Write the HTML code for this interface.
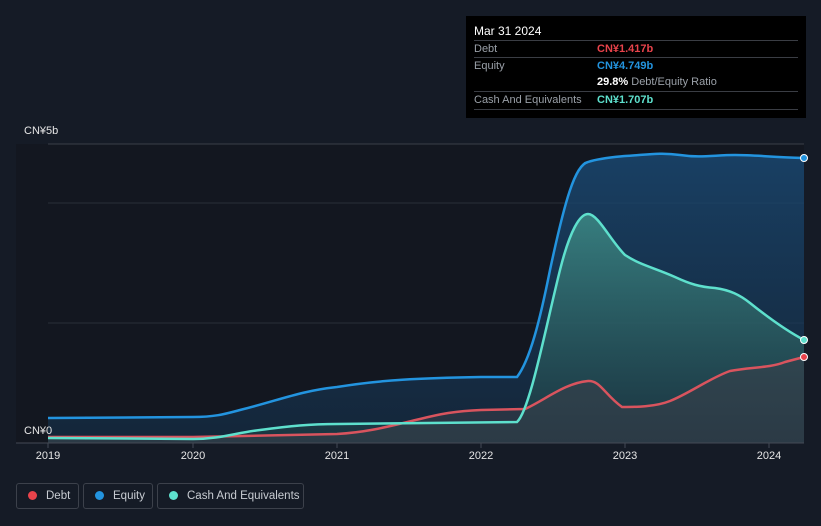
<!DOCTYPE html><html><head><style>
body{margin:0;width:821px;height:526px;background:#151b26;font-family:"Liberation Sans",sans-serif;overflow:hidden;position:relative}
.tt{position:absolute;left:466px;top:16px;width:340px;height:102px;background:#000;color:#fff;font-size:11px}
.row{position:absolute;left:8px;width:324px;border-top:1px solid #3a3d44;height:17px;line-height:17px;color:#9aa0a8}
.v{position:absolute;left:123px;font-weight:bold}
.leg{position:absolute;top:483px;height:26px;border:1px solid #3c414b;border-radius:3px;color:#c8ccd2;font-size:11.5px;line-height:24px;box-sizing:border-box;white-space:nowrap}
.leg i{display:inline-block;width:9px;height:9px;border-radius:50%;margin:0 9px 0 11px;vertical-align:-1px}
.ax{position:absolute;top:450px;color:#e6e6e6;font-size:11px;transform:translateX(-50%)}
</style></head><body>
<svg width="821" height="526" style="position:absolute;left:0;top:0">
<defs>
<linearGradient id="eg" x1="0" y1="0" x2="0" y2="1"><stop offset="0" stop-color="#1a4a75" stop-opacity=".8"/><stop offset="1" stop-color="#15304a" stop-opacity=".6"/></linearGradient>
<linearGradient id="cg" x1="0" y1="0" x2="0" y2="1"><stop offset="0" stop-color="#3f8f88" stop-opacity=".8"/><stop offset="1" stop-color="#1e3d44" stop-opacity=".6"/></linearGradient>
</defs>
<rect x="16" y="144" width="788" height="299" fill="#131720"/>
<line x1="48" y1="144" x2="804" y2="144" stroke="#3a3f48"/>
<line x1="48" y1="203" x2="804" y2="203" stroke="#2a2f38"/>
<line x1="48" y1="323" x2="804" y2="323" stroke="#2a2f38"/>
<path d="M48,418 L193,417 C215,417 225,414 240,410 C280,400 300,391 337,387 C380,380 420,378 481,377 L517,377 C530,360 540,320 550,270 C565,200 575,165 588,162 C600,158 615,157 625,156 C645,155 660,152 680,155 C700,158 715,155 735,155 C755,155 770,157 804,158 L804,443 L48,443Z" fill="url(#eg)"/>
<path d="M48,438 L193,439 C220,439 235,433 260,430 C290,426 310,424 337,424 L517,422 C530,410 545,330 560,270 C570,230 580,214 588,214 C598,214 610,240 625,255 C640,265 655,268 675,277 C690,284 700,287 715,288 C730,290 740,295 750,303 C765,315 785,330 804,340 L804,443 L48,443Z" fill="url(#cg)"/>
<path d="M48,437 L193,437 L337,434 C370,432 390,426 420,419 C440,414 455,411 481,410 L525,409 C545,400 565,383 588,381 C600,380 605,395 622,407 C635,407 655,407 670,401 C690,393 710,378 730,371 C750,367 770,368 785,362 L804,357 L804,443 L48,443Z" fill="#3b3f4a" fill-opacity=".55"/>
<path d="M48,437 L193,437 L337,434 C370,432 390,426 420,419 C440,414 455,411 481,410 L525,409 C545,400 565,383 588,381 C600,380 605,395 622,407 C635,407 655,407 670,401 C690,393 710,378 730,371 C750,367 770,368 785,362 L804,357" fill="none" stroke="#d9545e" stroke-width="2.5"/>
<path d="M48,418 L193,417 C215,417 225,414 240,410 C280,400 300,391 337,387 C380,380 420,378 481,377 L517,377 C530,360 540,320 550,270 C565,200 575,165 588,162 C600,158 615,157 625,156 C645,155 660,152 680,155 C700,158 715,155 735,155 C755,155 770,157 804,158" fill="none" stroke="#2394df" stroke-width="2.5"/>
<path d="M48,438 L193,439 C220,439 235,433 260,430 C290,426 310,424 337,424 L517,422 C530,410 545,330 560,270 C570,230 580,214 588,214 C598,214 610,240 625,255 C640,265 655,268 675,277 C690,284 700,287 715,288 C730,290 740,295 750,303 C765,315 785,330 804,340" fill="none" stroke="#5ee0cd" stroke-width="2.5"/>
<line x1="16" y1="443" x2="804" y2="443" stroke="#444a55"/>
<g stroke="#444a55"><line x1="48" y1="443" x2="48" y2="448"/><line x1="193" y1="443" x2="193" y2="448"/><line x1="337" y1="443" x2="337" y2="448"/><line x1="481" y1="443" x2="481" y2="448"/><line x1="625" y1="443" x2="625" y2="448"/><line x1="769" y1="443" x2="769" y2="448"/></g>
<circle cx="804" cy="158" r="3.5" fill="#2394df" stroke="#fff"/>
<circle cx="804" cy="340" r="3.5" fill="#5ee0cd" stroke="#fff"/>
<circle cx="804" cy="357" r="3.5" fill="#e8434b" stroke="#fff"/>
</svg>
<div style="position:absolute;left:24px;top:125px;color:#e6e6e6;font-size:11px">CN¥5b</div>
<div style="position:absolute;left:24px;top:425px;color:#e6e6e6;font-size:11px">CN¥0</div>
<div class="ax" style="left:48px">2019</div><div class="ax" style="left:193px">2020</div><div class="ax" style="left:337px">2021</div><div class="ax" style="left:481px">2022</div><div class="ax" style="left:625px">2023</div><div class="ax" style="left:769px">2024</div>
<div class="tt">
<div style="position:absolute;left:8px;top:8px;font-size:12px">Mar 31 2024</div>
<div class="row" style="top:24px">Debt<span class="v" style="color:#e8434b">CN¥1.417b</span></div>
<div class="row" style="top:41px">Equity<span class="v" style="color:#2394df">CN¥4.749b</span></div>
<div class="row" style="top:58px;border:0"><span class="v" style="color:#fff">29.8% <span style="font-weight:normal;color:#9aa0a8">Debt/Equity Ratio</span></span></div>
<div class="row" style="top:75px">Cash And Equivalents<span class="v" style="color:#5ee0cd">CN¥1.707b</span></div>
<div class="row" style="top:93px"></div>
</div>
<div class="leg" style="left:16px;width:63px"><i style="background:#e8434b"></i>Debt</div>
<div class="leg" style="left:83px;width:70px"><i style="background:#2394df"></i>Equity</div>
<div class="leg" style="left:157px;width:147px"><i style="background:#5ee0cd"></i>Cash And Equivalents</div>
</body></html>
